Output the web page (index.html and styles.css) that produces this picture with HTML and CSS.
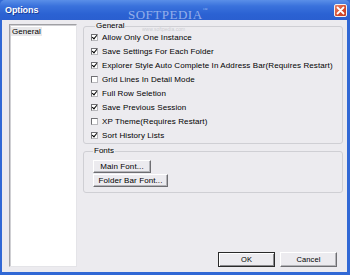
FILE: index.html
```html
<!DOCTYPE html>
<html>
<head>
<meta charset="utf-8">
<link rel="stylesheet" href="styles.css">
</head>
<body>
<div class="window">
  <div class="titlebar">
    <span class="title">Options</span>
    <span class="close"><svg width="9" height="9" viewBox="0 0 9 9"><path d="M1.5 1.5 L7.5 7.5 M7.5 1.5 L1.5 7.5" stroke="#fff" stroke-width="1.8" stroke-linecap="round"/></svg></span>
  </div>
  <div class="body">
    <div class="list"><span class="item">General</span></div>
    <div class="main">
      <fieldset class="group general">
        <legend>General</legend>
        <label class="row"><span class="cb on"></span>Allow Only One Instance</label>
        <label class="row"><span class="cb on"></span>Save Settings For Each Folder</label>
        <label class="row"><span class="cb on"></span>Explorer Style Auto Complete In Address Bar(Requires Restart)</label>
        <label class="row"><span class="cb"></span>Grid Lines In Detail Mode</label>
        <label class="row"><span class="cb on"></span>Full Row Seletion</label>
        <label class="row"><span class="cb on"></span>Save Previous Session</label>
        <label class="row"><span class="cb"></span>XP Theme(Requires Restart)</label>
        <label class="row"><span class="cb on"></span>Sort History Lists</label>
      </fieldset>
      <fieldset class="group fonts">
        <legend>Fonts</legend>
        <button class="btn main-font">Main Font...</button>
        <button class="btn folder-font">Folder Bar Font...</button>
      </fieldset>
      <div class="actions">
        <button class="btn dlg default">OK</button>
        <button class="btn dlg">Cancel</button>
      </div>
    </div>
  </div>
  <div class="watermark">SOFTPEDIA<span class="tm">™</span></div>
  <div class="watermark-url">www.softpedia.com</div>
</div>
</body>
</html>
```
FILE: styles.css
```css
* { box-sizing: border-box; }
html, body { margin: 0; padding: 0; }
body {
  width: 350px;
  height: 275px;
  overflow: hidden;
  font-family: "Liberation Sans", Arial, sans-serif;
  font-size: 8px;
  color: #000;
}
.window {
  position: relative;
  width: 350px;
  height: 275px;
  background: #3168d5;
  display: flex;
  flex-direction: column;
}
.titlebar {
  height: 20px;
  flex: none;
  display: flex;
  align-items: center;
  justify-content: space-between;
  padding: 0 3px 0 5px;
  background: linear-gradient(#5a8fe8 0%, #3a72dc 30%, #2b62d3 70%, #2a5fd0 100%);
  border-radius: 5px 5px 0 0;
}
.title {
  color: #fff;
  font-weight: bold;
  font-size: 9px;
  letter-spacing: -0.1px;
  text-shadow: 1px 1px 0 #1a3f9c;
}
.close {
  width: 13px;
  height: 13px;
  margin-top: 1px;
  display: flex;
  align-items: center;
  justify-content: center;
  background: linear-gradient(135deg, #e8836a, #d4482a 60%, #c53d22);
  border: 1px solid #f2f2f2;
  border-radius: 2px;
}
.body {
  flex: 1;
  margin: 0 3px 3px 2px;
  background: #ecebef;
  display: flex;
  padding: 2px 4px 5px 7px;
  gap: 6px;
}
.list {
  width: 68px;
  margin-top: 2px;
  background: #fff;
  border-top: 1px solid #a0a0a4;
  border-left: 1px solid #a0a0a4;
  border-right: 1px solid #e4e4e8;
  border-bottom: 1px solid #e4e4e8;
  box-shadow: inset 1px 1px 0 #cfcfd3;
  padding: 2px 0 0 1px;
}
.item {
  display: inline-block;
  line-height: 9px;
  padding: 0 1px;
  background: #e8e8ea;
  letter-spacing: 0.05px;
}
.main {
  flex: 1;
  display: flex;
  flex-direction: column;
}
.group {
  margin: 0;
  border: 1px solid #cfcfd4;
  border-radius: 3px;
  min-width: 0;
}
.group legend {
  line-height: 8px;
  padding: 0 1px;
  margin-left: 4px;
  letter-spacing: 0;
}
.fonts legend {
  margin-left: 0;
}
.general {
  padding: 0 0 1px 7px;
}
.row {
  display: flex;
  align-items: center;
  height: 14px;
  white-space: nowrap;
  letter-spacing: 0.1px;
}
.cb {
  width: 7px;
  height: 7px;
  flex: none;
  margin-right: 4px;
  background: #fff;
  border: 1px solid #6f6f73;
  border-right-color: #b8b8bc;
  border-bottom-color: #b8b8bc;
  position: relative;
}
.cb.on::after {
  content: "";
  position: absolute;
  left: 0px;
  top: -1px;
  width: 2px;
  height: 4px;
  border-right: 1.5px solid #000;
  border-bottom: 1.5px solid #000;
  transform: translate(1px, 0) rotate(40deg);
}
.fonts {
  margin-top: 3px;
  padding: 5px 0 5px 9px;
  display: flex;
  flex-direction: column;
  align-items: flex-start;
  gap: 1px;
}
.btn {
  font-family: "Liberation Sans", Arial, sans-serif;
  font-size: 8px;
  letter-spacing: 0.1px;
  color: #000;
  background: #ecebef;
  border: 1px solid;
  border-color: #fff #6e6e72 #6e6e72 #fff;
  box-shadow: inset -1px -1px 0 #b4b4b8;
  padding: 0;
  margin: 0;
  height: 13px;
  line-height: 11px;
}
.main-font { width: 58px; }
.folder-font { width: 75px; }
.actions {
  margin-top: auto;
  display: flex;
  justify-content: flex-end;
  gap: 5px;
  padding-right: 6px;
}
.dlg {
  width: 57px;
  height: 15px;
  line-height: 13px;
  font-size: 7.5px;
}
.dlg.default {
  border: 1px solid #2a2a2a;
  box-shadow: inset 1px 1px 0 #fff, inset -1px -1px 0 #8a8a8e;
}
.watermark {
  position: absolute;
  left: 128px;
  top: 7px;
  font-family: "Liberation Serif", serif;
  font-size: 13px;
  letter-spacing: 0.5px;
  color: rgba(235, 240, 255, 0.55);
  pointer-events: none;
}
.watermark .tm { font-size: 5px; vertical-align: top; }
.watermark-url {
  position: absolute;
  left: 142px;
  top: 27px;
  font-family: "Liberation Sans", sans-serif;
  font-size: 5px;
  line-height: 5px;
  color: rgba(150, 150, 160, 0.4);
  pointer-events: none;
}
```
